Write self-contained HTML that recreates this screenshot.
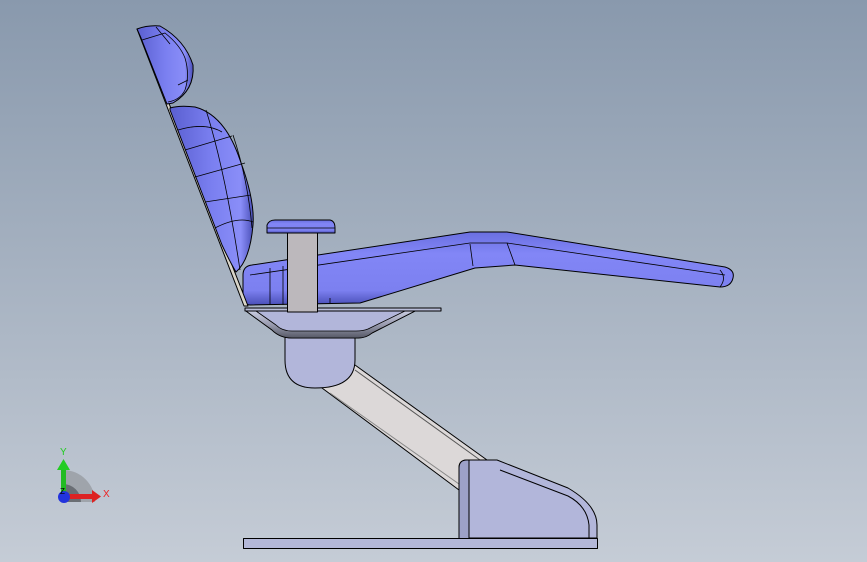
<!DOCTYPE html>
<html><head><style>
html,body{margin:0;padding:0}
body{width:867px;height:562px;overflow:hidden;background:linear-gradient(#8999ad,#c5ccd6);}
svg{display:block}
</style></head><body>
<svg width="867" height="562" viewBox="0 0 867 562" xmlns="http://www.w3.org/2000/svg">
<defs>
<linearGradient id="cush" x1="0" y1="0" x2="0" y2="1">
<stop offset="0" stop-color="#6a6fe0"/><stop offset="0.3" stop-color="#8286f6"/><stop offset="0.8" stop-color="#7c80f0"/><stop offset="1" stop-color="#4a4fb8"/></linearGradient>
<linearGradient id="back" x1="0" y1="0" x2="1" y2="0">
<stop offset="0" stop-color="#5a5fd0"/><stop offset="0.5" stop-color="#7a7ff0"/><stop offset="0.85" stop-color="#8a8ef8"/><stop offset="1" stop-color="#4a4fb8"/></linearGradient>
<linearGradient id="tube" x1="0" y1="0" x2="0" y2="1">
<stop offset="0" stop-color="#c8cce0"/><stop offset="0.5" stop-color="#9a9cb0"/><stop offset="1" stop-color="#555865"/></linearGradient>
</defs>
<g stroke="#000" stroke-width="1" stroke-linejoin="round">
<rect x="243.5" y="538.5" width="354" height="10" fill="#b4b8d8"/>
<polygon points="322,388 355,365 487,460 459,490" fill="#dcd8d8"/>
<line x1="330" y1="393" x2="459" y2="484" stroke="#888"/>
<line x1="355" y1="370" x2="480" y2="460" stroke="#555"/>
<path d="M459,538 L459,468 Q459,460 467,460 L497,460 L568,488 Q597,505 597,525 L597,538 Z" fill="#b2b6da"/>
<path d="M459,538 L459,468 Q459,460 467,460 L469,460 L469,538" fill="#9da1c8"/>
<path d="M500,470 L568,496 Q587,506 589,525 L589,538" fill="none" stroke="#000"/>
<path d="M285,332 L285,360 Q285,388 315,388 Q355,388 355,360 L355,332 Z" fill="#b2b6da"/>
<path d="M246,311 L272,330 Q280,338 292,338 L358,338 Q366,338 372,333 L415,311 Z" fill="#b2b6da"/>
<path d="M246,311 L272,330 Q280,338 292,338 L358,338 Q366,338 372,333 L415,311 L405,311 L368,329 Q363,331 356,331 L292,331 Q282,331 276,325 L256,311 Z" fill="url(#tube)" stroke-width="0.8"/>
<rect x="245" y="308" width="196" height="3" fill="#b8bcd8"/>
<path d="M252,265 L470,232 L507,232 L725,267 Q735,270 733,278 Q731,287 720,287 L515,265 L475,268 L360,303 L250,305 Q243,305 243,292 L243,275 Q243,266 252,265 Z" fill="url(#cush)"/>
<path d="M250,275 L470,243 L507,243 L725,275" fill="none" stroke-width="0.8"/>
<path d="M270,268 L270,305 M283,266 L283,305 M330,298 L330,303 M470,244 L473,266 M507,243 L515,265 M720,270 Q727,278 720,287" fill="none" stroke-width="0.8"/>
<rect x="287.5" y="233" width="30" height="79" fill="#bcb8bc"/>
<path d="M267,233 L267,225 Q269,220 275,220 L330,220 Q335,221 335,228 L335,233 Z" fill="url(#cush)"/>
<line x1="267" y1="228" x2="335" y2="228" stroke-width="0.8"/>
<polygon points="137,29 140,29 248,306 244,306" fill="#d8d4c8"/>
<path d="M170,108 Q180,105 195,107 Q225,115 240,160 Q255,200 253,225 Q250,260 236,272 Q230,262 222,245 L170,110 Z" fill="url(#back)"/>
<path d="M178,130 Q205,122 222,132 M185,150 L232,136 M195,177 L245,163 M205,202 L251,195 M215,228 Q238,216 253,222 M206,110 Q225,170 240,270 M233,135 Q248,180 252,228" fill="none" stroke-width="0.8"/>
<path d="M137,29 Q148,25 160,26 Q185,40 193,65 Q195,90 173,103 L167,104 L141,38 Z" fill="url(#back)"/>
<path d="M142,40 L165,33 Q180,45 185,58 Q190,75 185,90 Q180,100 168,102 M156,27 L170,44 M178,85 L188,80" fill="none" stroke-width="0.8"/>
</g>
<g>
<path d="M63,470 L63,502 L95,502 A32,32 0 0 0 63,470 Z" fill="#9fa4ab"/>
<path d="M63,484 L63,502 L81,502 A18,18 0 0 0 63,484 Z" fill="#6a6e74"/>
<rect x="61" y="468" width="5" height="30" fill="#22bb22"/>
<polygon points="57,470 63.5,459 70,470" fill="#22cc22"/>
<rect x="65" y="494" width="28" height="5" fill="#dd2222"/>
<polygon points="92,490 101,496.5 92,503" fill="#dd2222"/>
<circle cx="64" cy="497" r="6" fill="#2233dd"/>
<text x="60" y="455" font-family="Liberation Sans,sans-serif" font-size="10" fill="#22cc22">Y</text>
<text x="103" y="497" font-family="Liberation Sans,sans-serif" font-size="10" fill="#ee2222">X</text>
<text x="60" y="494" font-family="Liberation Sans,sans-serif" font-size="8" fill="#000">Z</text>
</g>
</svg>
</body></html>
